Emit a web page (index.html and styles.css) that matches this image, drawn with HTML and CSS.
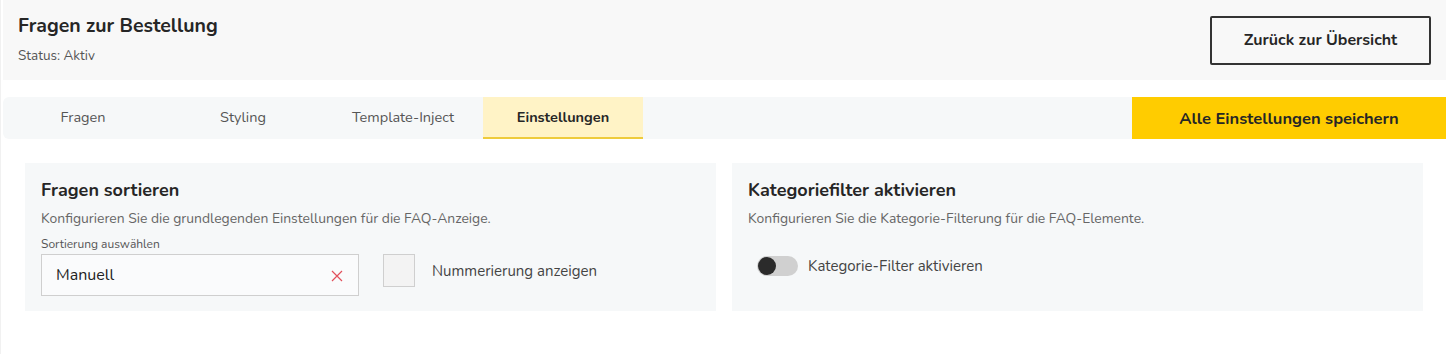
FILE: index.html
```html
<!DOCTYPE html>
<html lang="de">
<head>
<meta charset="utf-8">
<title>Fragen zur Bestellung</title>
<link rel="stylesheet" href="styles.css">
</head>
<body>
<div class="page">
  <header class="header">
    <div class="header-text">
      <h1 class="title">Fragen zur Bestellung</h1>
      <div class="status">Status: Aktiv</div>
    </div>
    <button class="btn-outline">Zurück zur Übersicht</button>
  </header>

  <div class="tabbar">
    <nav class="tabs">
      <div class="tab">Fragen</div>
      <div class="tab">Styling</div>
      <div class="tab">Template-Inject</div>
      <div class="tab active">Einstellungen</div>
    </nav>
    <button class="btn-save">Alle Einstellungen speichern</button>
  </div>

  <main class="cards">
    <section class="card">
      <h2 class="card-title">Fragen sortieren</h2>
      <p class="card-desc">Konfigurieren Sie die grundlegenden Einstellungen für die FAQ-Anzeige.</p>
      <div class="field-row">
        <div class="field">
          <label class="field-label">Sortierung auswählen</label>
          <div class="select">
            <span class="select-value">Manuell</span>
            <svg class="clear" width="12" height="12" viewBox="0 0 12 12"><path d="M1 1 L11 11 M11 1 L1 11" stroke="#e2505c" stroke-width="1.2" fill="none"/></svg>
          </div>
        </div>
        <div class="check-row">
          <span class="checkbox"></span>
          <span class="check-label">Nummerierung anzeigen</span>
        </div>
      </div>
    </section>

    <section class="card">
      <h2 class="card-title">Kategoriefilter aktivieren</h2>
      <p class="card-desc">Konfigurieren Sie die Kategorie-Filterung für die FAQ-Elemente.</p>
      <div class="toggle-row">
        <span class="toggle"><span class="knob"></span></span>
        <span class="toggle-label">Kategorie-Filter aktivieren</span>
      </div>
    </section>
  </main>
</div>
</body>
</html>
```

FILE: styles.css
```css
* { box-sizing: border-box; }

html, body {
  margin: 0;
  padding: 0;
  background: #ffffff;
}

body {
  font-family: "Nunito", "Lato", "Open Sans", sans-serif;
  color: #2a2a2a;
}

.page {
  padding-left: 2px;
  border-left: 1px solid #f1f1f1;
  min-height: 354px;
}

.header {
  display: flex;
  align-items: center;
  justify-content: space-between;
  height: 80px;
  background: #f8f8f8;
  padding: 0 15px;
}

.header-text {
  margin-top: -2px;
}

.title {
  margin: 0 0 9px 0;
  font-size: 19.5px;
  line-height: 24px;
  font-weight: 700;
  color: #262626;
}

.status {
  font-size: 13.5px;
  line-height: 18px;
  color: #555;
}

.btn-outline {
  height: 49px;
  width: 221px;
  background: transparent;
  border: 2px solid #333;
  border-radius: 2px;
  font-family: inherit;
  font-size: 16px;
  font-weight: 700;
  color: #262626;
  cursor: pointer;
}

.tabbar {
  display: flex;
  justify-content: space-between;
  margin-top: 17px;
  height: 42px;
  background: #f6f8f9;
  border-radius: 6px 0 0 6px;
}

.tabs {
  display: flex;
}

.tab {
  width: 160px;
  display: flex;
  align-items: center;
  justify-content: center;
  font-size: 14.5px;
  color: #555;
  border-bottom: 2px solid transparent;
}

.tab.active {
  background: #fff3c6;
  border-bottom-color: #eecb3c;
  font-weight: 700;
  color: #262626;
}

.btn-save {
  width: 314px;
  height: 42px;
  border: none;
  background: #ffcc00;
  font-family: inherit;
  font-size: 16.5px;
  font-weight: 700;
  color: #262626;
  cursor: pointer;
}

.cards {
  display: grid;
  grid-template-columns: 1fr 1fr;
  gap: 16px;
  padding: 24px 23px 0 22px;
}

.card {
  background: #f6f8f9;
  padding: 16px 16px 16px 16px;
  height: 148px;
}

.card-title {
  margin: 0;
  font-size: 18px;
  line-height: 22px;
  font-weight: 700;
  color: #262626;
}

.card-desc {
  margin: 9px 0 0 0;
  font-size: 13.9px;
  line-height: 18px;
  color: #666;
}

.field-row {
  display: flex;
  align-items: flex-end;
  margin-top: 9px;
}

.field {
  display: flex;
  flex-direction: column;
}

.field-label {
  font-size: 12px;
  line-height: 15px;
  color: #555;
  margin-bottom: 2px;
}

.select {
  width: 318px;
  height: 42px;
  border: 1px solid #cfcfcf;
  background: #fafbfc;
  display: flex;
  align-items: center;
  justify-content: space-between;
  padding: 0 15px 0 14px;
}

.select-value {
  font-size: 16px;
  color: #222;
}

.clear { margin-top: 2px; }

.check-row {
  display: flex;
  align-items: center;
  margin-left: 24px;
  margin-bottom: 9px;
}

.checkbox {
  width: 32px;
  height: 33px;
  background: #f3f3f3;
  border: 1px solid #cfcfcf;
}

.check-label {
  margin-left: 17px;
  font-size: 15px;
  color: #444;
}

.toggle-row {
  display: flex;
  align-items: center;
  margin-top: 28px;
  padding-left: 9px;
}

.toggle {
  width: 41px;
  height: 20px;
  border-radius: 10px;
  background: #d0d0d0;
  display: flex;
  align-items: center;
  padding-left: 1px;
}

.knob {
  width: 18px;
  height: 18px;
  border-radius: 50%;
  background: #2b2b2b;
}

.toggle-label {
  margin-left: 10px;
  font-size: 15px;
  color: #444;
}
```
